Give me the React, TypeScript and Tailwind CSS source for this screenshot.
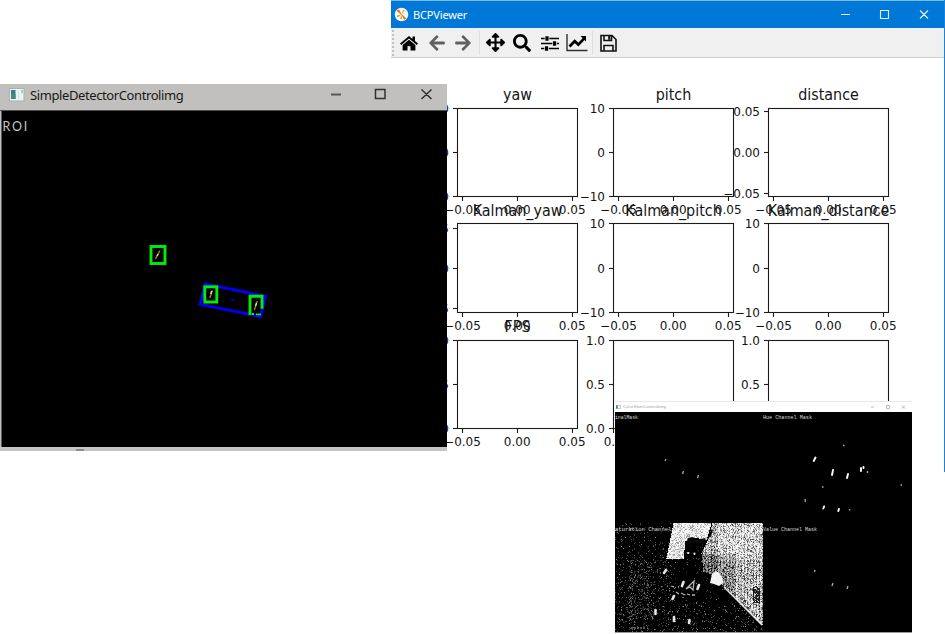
import React from "react";
import { FaArrowLeft, FaArrowRight, FaArrowsAlt, FaSearch } from "react-icons/fa";

type Pt = [number, number];
type AxesSpec = {
  x: number;
  y: number;
  h: number;
  title?: string;
  xt: [number, string][];
  yt: [number, string][];
};

const M = "\u2212";
const xt = (x: number): [number, string][] => [
  [x + 5, M + "0.05"],
  [x + 60, "0.00"],
  [x + 115, "0.05"],
];
const tens = (a: number, b: number, c: number): [number, string][] => [
  [a, "10"],
  [b, "0"],
  [c, M + "10"],
];
const units = (y: number): [number, string][] => [
  [y, "1.0"],
  [y + 44, "0.5"],
  [y + 88, "0.0"],
];

const axes: AxesSpec[] = [
  { x: 457.5, y: 108.5, h: 88, title: "yaw", xt: xt(457.5), yt: tens(108.5, 152.5, 196.5) },
  { x: 613.5, y: 108.5, h: 88, title: "pitch", xt: xt(613.5), yt: tens(108.5, 152.5, 196.5) },
  {
    x: 768.5, y: 108.5, h: 88, title: "distance", xt: xt(768.5),
    yt: [[111.5, "0.05"], [152.5, "0.00"], [193.5, M + "0.05"]],
  },
  {
    x: 457.5, y: 223.5, h: 89, title: "Kalman_yaw", xt: xt(457.5),
    yt: [[228.5, "0.05"], [268.5, "0.00"], [308.5, M + "0.05"]],
  },
  { x: 613.5, y: 223.5, h: 89, title: "Kalman_pitch", xt: xt(613.5), yt: tens(223.5, 268.5, 312.5) },
  { x: 768.5, y: 223.5, h: 89, title: "Kalman_distance", xt: xt(768.5), yt: tens(223.5, 268.5, 312.5) },
  { x: 457.5, y: 340.5, h: 88, title: "FPS", xt: xt(457.5), yt: units(340.5) },
  { x: 613.5, y: 340.5, h: 88, xt: [[613.5, "0.0"]], yt: units(340.5) },
  { x: 768.5, y: 340.5, h: 88, xt: [], yt: units(340.5) },
];

function Axes({ x, y, h, title, xt, yt }: AxesSpec) {
  return (
    <g>
      <rect x={x} y={y} width={120} height={h} fill="none" stroke="#1c1c1c" strokeWidth={1.1} />
      {xt.map(([tx, label]) => (
        <g key={label}>
          <path d={`M${tx} ${y + h}v4.500`} stroke="#1c1c1c" strokeWidth={1.1} />
          <text x={label[0] === M ? tx : tx - 0.3} y={y + h + 17.5} fontSize={12} textAnchor="middle">{label}</text>
        </g>
      ))}
      {yt.map(([ty, label]) => (
        <g key={label}>
          <path d={`M${x} ${ty}h-4.500`} stroke="#1c1c1c" strokeWidth={1.1} />
          <text x={x - 8.5} y={ty + 4} fontSize={12} textAnchor="end">{label}</text>
        </g>
      ))}
      {title && (
        <text transform={`translate(${x + 60} ${y === 223.5 ? 216.4 : y - 8.4}) scale(.895 1)`} fontSize={16} textAnchor="middle">{title}</text>
      )}
    </g>
  );
}

function Figure() {
  return (
    <svg className="block h-[414px] w-[553px]" viewBox="391 58 553 414" fontFamily='"DejaVu Sans", sans-serif' fill="#141414">
      {axes.map((a, i) => <Axes key={i} {...a} />)}
    </svg>
  );
}

function ViewerWindow() {
  return (
    <section className="absolute left-[391px] top-0 h-[472px] w-[554px] border-r border-[#1883da] bg-white">
      <header className="flex h-7 items-center border-t border-[#7fbbea] bg-[#0078d7] text-white">
        <svg className="ml-[3px] h-[15px] w-[15px]" viewBox="0 0 15 15">
          <circle cx="7.5" cy="7.5" r="6.8" fill="#f8f7f0" />
          <path d="M8 8.500 2.500 3.500 5 2.500Z" fill="#e96420" />
          <path d="M7.500 7.500 9 2.500l2 1Z" fill="#edb33b" />
          <path d="m7 6.500 5.500 5-2.500 1.500Z" fill="#f57c20" />
          <path d="m7.500 7.500-4.500 1 .5 2Z" fill="#79b943" />
          <path d="m7.500 7.500-1.500 4.500 2 0Z" fill="#e4a52f" />
        </svg>
        <span className="mb-px ml-[4px] font-['Noto_Sans',sans-serif] text-[11px] leading-none tracking-[-0.15px]">BCPViewer</span>
        <svg className="mb-px ml-auto mr-[14px] h-4 w-[92px]" viewBox="0 0 92 16" fill="none" stroke="#e6f2fc" strokeWidth="1.1">
          <path d="M3 8.500h9M42.500 4.500h8v8h-8zM82 4.500l8 8M90 4.500l-8 8" />
        </svg>
      </header>
      <nav className="flex h-[30px] items-center border-b border-[#cfcfcf] bg-[#f0f0f0] text-black">
        <i className="ml-px h-[26px] border-l-2 border-dotted border-[#c0c0c0]" />
        <svg className="ml-[6px] h-[20px] w-[18px]" viewBox="0 0 18 20">
          <path d="M9 3 0 10.600l1.200 1.300L9 5.400l7.800 6.500L18 10.600l-3-2.600V3.500h-2.500v2.400Z" />
          <path d="M9 6.700 2.600 12v5.500h4.900v-4.300h3v4.300h4.900V12Z" />
        </svg>
        <FaArrowLeft className="ml-[10px] text-[18px] text-[#606060]" />
        <FaArrowRight className="ml-[8px] text-[18px] text-[#606060]" />
        <i className="ml-[7px] h-6 border-l border-[#dedede]" />
        <FaArrowsAlt className="ml-[6px] text-[19px]" />
        <FaSearch className="ml-[8px] text-[18px]" />
        <svg className="ml-[10px] h-[20px] w-[18px]" viewBox="0 0 18 20" stroke="#000" fill="none">
          <path d="M0 5.500h18M0 10.500h18M0 15.500h18" strokeWidth="1.700" />
          <path d="M6 3v5M13.500 8v5M5.500 13v5" strokeWidth="4.600" stroke="#f0f0f0" />
          <path d="M6 3.300v4.400M13.500 8.300v4.400M5.500 13.300v4.400" strokeWidth="3.200" />
        </svg>
        <svg className="ml-[7px] h-[20px] w-[22px]" viewBox="0 0 22 20">
          <path d="M1 1v16.500h20.500" fill="none" stroke="#303030" strokeWidth="1.400" />
          <path d="m3.500 13.500 5.200-5.300 3.600 3.400 6-6.200" fill="none" stroke="#000" strokeWidth="2.800" />
          <path d="M14.500 3H20v5.600Z" />
        </svg>
        <i className="ml-[4px] h-6 border-l border-[#dedede]" />
        <svg className="ml-[7px] h-[18px] w-[17px]" viewBox="0 0 17 18" fill="none" stroke="#111" strokeWidth="1.600">
          <path d="M1 1.500h11l4 4v11.500H1ZM4 17v-5.500h9V17M4 1.500v5h7.500v-5" />
          <path d="M9.200 2v3.800" strokeWidth="2" />
        </svg>
      </nav>
      <Figure />
    </section>
  );
}

function DetectorWindow() {
  return (
    <section className="absolute left-0 top-[84px] flex h-[367px] w-[447px] flex-col bg-[#c2c0be]">
      <header className="flex h-[26px] items-center text-[#181818]">
        <svg className="mb-[4px] ml-[9px] h-[14px] w-[16px]" viewBox="0 0 16 14">
          <rect x=".5" y=".5" width="14.500" height="12.500" fill="#eaf2f4" stroke="#a9b0b3" />
          <rect x="2" y="2" width="4.500" height="9" fill="#387c8e" />
          <rect x="2" y="6" width="4.500" height="5" fill="#3e8d77" />
          <rect x="9" y="3" width="1" height="8" fill="#d5e0e4" />
          <rect x="12" y="2" width="2" height="3" fill="#9ed7b4" />
        </svg>
        <span className="mb-[4px] ml-[5px] font-['Noto_Sans',sans-serif] text-[13px] leading-none tracking-[-0.4px]">SimpleDetectorControlimg</span>
        <svg className="mb-[6px] ml-auto mr-[14px] h-4 w-[104px]" viewBox="0 0 104 16" fill="none" stroke="#303030" strokeWidth="1.500">
          <path d="M2 8.500h10" strokeWidth="2" stroke="#555" />
          <path d="M46.500 3.500h9.500v9h-9.500zM92.500 3.500l10 9.500M102.500 3.500l-10 9.500" />
        </svg>
      </header>
      <svg className="block h-[337px] w-[447px]" viewBox="0 110 447 337">
        <path d="M1.500 110.500H447V447H1.500Z" fill="#000" />
        <path d="M0 110.500h447" stroke="#4d4d4d" />
        <text x="2.500" y="131" fill="#c6c6c6" fontSize="12.500" letterSpacing="1.700" fontFamily='Lato, sans-serif'>ROI</text>
        <g fill="none" stroke="#00ed0a" strokeWidth="2.900">
          <rect x="151" y="246.500" width="14" height="17" />
          <path d="m205.200 284 60.300 12.200-5 20.300-60.300-12.200Z" stroke="#0000f0" strokeWidth="2.900" />
          <rect x="204.800" y="286.800" width="12" height="15.200" />
          <path d="M250 315v-18.700h12v12.500" />
          <path d="M252 314h2M256 314.300h5" strokeWidth="1.800" />
        </g>
        <g strokeWidth="1.300" stroke="#a08d20">
          <path d="m155.500 259 4.500-8.500M209.800 298l2.700-7.500M254.300 310l3-9" />
        </g>
        <path d="m158 254-1 2M211.600 291l-1 3M256.500 303l-1 3" stroke="#e6dd8d" strokeWidth="1.400" />
        <circle cx="232.500" cy="300" r="1.400" fill="#0000c8" />
      </svg>
      <footer className="flex h-1 items-end bg-[#c5c5c5]">
        <i className="ml-[76px] h-0.5 w-2 bg-[#8a8a8a]" />
      </footer>
    </section>
  );
}

const inside = (x: number, y: number, p: Pt[]) => {
  let hit = false;
  for (let i = 0, j = p.length - 1; i < p.length; j = i++) {
    const [ax, ay] = p[i];
    const [bx, by] = p[j];
    if (ay > y !== by > y && x < ((bx - ax) * (y - ay)) / (by - ay) + ax) hit = !hit;
  }
  return hit;
};

const wallLeft: Pt[] = [[58, 0], [96, 0], [91, 17], [80, 14], [70, 18], [68, 36], [51, 35]];
const wallRight: Pt[] = [[97, 0], [148, 0], [148, 102], [110, 64], [97, 51], [88, 48], [86, 30], [92, 18]];
const robot: Pt[] = [[68, 18], [90, 16], [92, 48], [98, 60], [115, 72], [95, 85], [55, 70], [60, 40]];

// Saturation threshold noise, bucketed by grey level into one path each.
function noisePaths() {
  let s = 7321;
  const rnd = () => {
    s = (s * 1664525 + 1013904223) >>> 0;
    return s / 4294967296;
  };
  const cols = Array.from({ length: 148 }, () => rnd());
  const out: string[] = Array.from({ length: 8 }, () => "");
  for (let y = 0; y < 110; y++) {
    for (let x = 0; x < 148; x++) {
      let level = 0;
      const r = rnd();
      const t = rnd();
      if (inside(x, y, wallLeft)) level = 0.92 - 0.4 * r * r;
      else if (inside(x, y, wallRight)) {
        let base = 1 - (x % 3 === 0 ? 0.14 : 0) - 0.08 * cols[x];
        if (y > 30) base -= Math.min(0.1, (y - 30) * 0.01);
        if (x < 120 && y > 30) base -= 0.16;
        if (x < 103) base -= 0.1;
        level = base - 0.6 * r * r;
        if (x > 137 && x < 145 && y > 62 && y < 80 && t < 0.72) level *= 0.15;
      } else {
        let d = 0.05;
        if (x < 60 && y > 36) d = x > 12 && x < 40 && y < 97 ? 0.3 : 0.14;
        if (x >= 58 && y > 78) d = 0.14;
        if (x < 50 && y <= 36) d = 0.09;
        if (inside(x, y, robot)) d = 0.03;
        d *= 0.4 + 1.2 * cols[x];
        if (r < d) level = 0.12 + 0.36 * t * t;
      }
      const k = Math.min(8, Math.round(level * 9));
      if (k > 0) out[k - 1] += `M${x} ${y}h1v1h-1z`;
    }
  }
  return out;
}
const noise = noisePaths();
const greys = ["#202020", "#3c3c3c", "#5a5a5a", "#7c7c7c", "#a0a0a0", "#c4c4c4", "#e2e2e2", "#fafafa"];

function FilterWindow() {
  return (
    <section className="absolute left-[615px] top-[401px] flex h-[232px] w-[297px] flex-col bg-black">
      <header className="flex h-[11px] items-center border-t border-[#e8e8e8] bg-white text-[#999]">
        <i className="mb-px ml-px h-1 w-[5px] border border-l-2 border-[#bdc9cb] border-l-[#499394]" />
        <span className="mb-px ml-[2px] font-['Noto_Sans',sans-serif] text-[4.300px] leading-none">ColorfilterControlimg</span>
        <svg className="mb-px ml-auto mr-[2px] h-[8px] w-[40px]" viewBox="0 0 40 8" fill="none" stroke="#aaa" strokeWidth=".8">
          <path d="M1 4h3M16.500 2.500h3v3h-3zM32 2.500l3 3M35 2.500l-3 3" />
        </svg>
      </header>
      <svg className="block h-[221px] w-[297px]" viewBox="615 412 297 221">
        <g transform="translate(615 523)">
          {noise.map((d, i) => <path key={i} d={d} fill={greys[i]} shapeRendering="crispEdges" />)}
          <path d="m109 64 38 38" stroke="#e8e8e8" strokeWidth="1.400" />
          <path d="m97 51 4-3 3 2 3 4 1 6-4 3-5-2-4-1Z" fill="#f2f2f2" />
          <path d="m73 15 5-1 4 3 8-2 1 5-20 1ZM93 12l4-6 1 1-3 8Z" fill="#080808" />
          <g stroke="#e6e6e6" strokeLinecap="round" strokeWidth="2.600">
            <path d="m49 50 2-3M67 63l1.500-4M82.500 66l1.500-4M57.500 76l1.500-3M40.500 91v-4M59 98v-4M74 100l.5-3" />
            <path d="M73 30h.5M79.500 30.500v.5" strokeWidth="2" />
          </g>
          <path d="m71 66 8-8-1 9-3-3-4 2M61 69l3 2M66 70l4 2M72 71l3 1M77 72l3 0M56 63l3 1M63 64l1 0" fill="none" stroke="#b4b4b4" strokeWidth="1.300" />
          <path d="M16 105h15" stroke="#a8a8a8" strokeDasharray="2 1" />
        </g>
        <g stroke="#fff" strokeWidth="1.900" strokeLinecap="round">
          <path d="m813.700 461 1.800-3.500M832 475l1-5M847 478l1-4M861 471v-3M863.500 468v-1M823.300 508.500l.8-2M838.300 511l.6-2" />
        </g>
        <g stroke="#aaa" strokeWidth="1.300">
          <path d="m843 445 1.500 1M867.500 471v2M822 487h1.500M900.500 485h1.500M805.200 499v3M849.700 509v1.500M665 461l1-2M682.500 474l1-3M697.500 478l1-3M814.300 572l1-2M832 586l1-3M847 589l1-3" />
        </g>
        <g fill="#dedede" fontFamily='"Liberation Mono", monospace' fontSize="5">
          <text x="615" y="419" textLength="23" lengthAdjust="spacingAndGlyphs">inalMask</text>
          <text x="763" y="419" textLength="49" lengthAdjust="spacingAndGlyphs">Hue Channel Mask</text>
          <text x="615" y="530.500" textLength="63" lengthAdjust="spacingAndGlyphs">aturation Channel M</text>
          <text x="763" y="530.500" textLength="54" lengthAdjust="spacingAndGlyphs">Value Channel Mask</text>
        </g>
        <path d="M615 632.500h297" stroke="#999" />
      </svg>
    </section>
  );
}

export default function App() {
  return (
    <main className="relative h-[634px] w-[945px] overflow-hidden bg-white">
      <ViewerWindow />
      <DetectorWindow />
      <FilterWindow />
    </main>
  );
}
